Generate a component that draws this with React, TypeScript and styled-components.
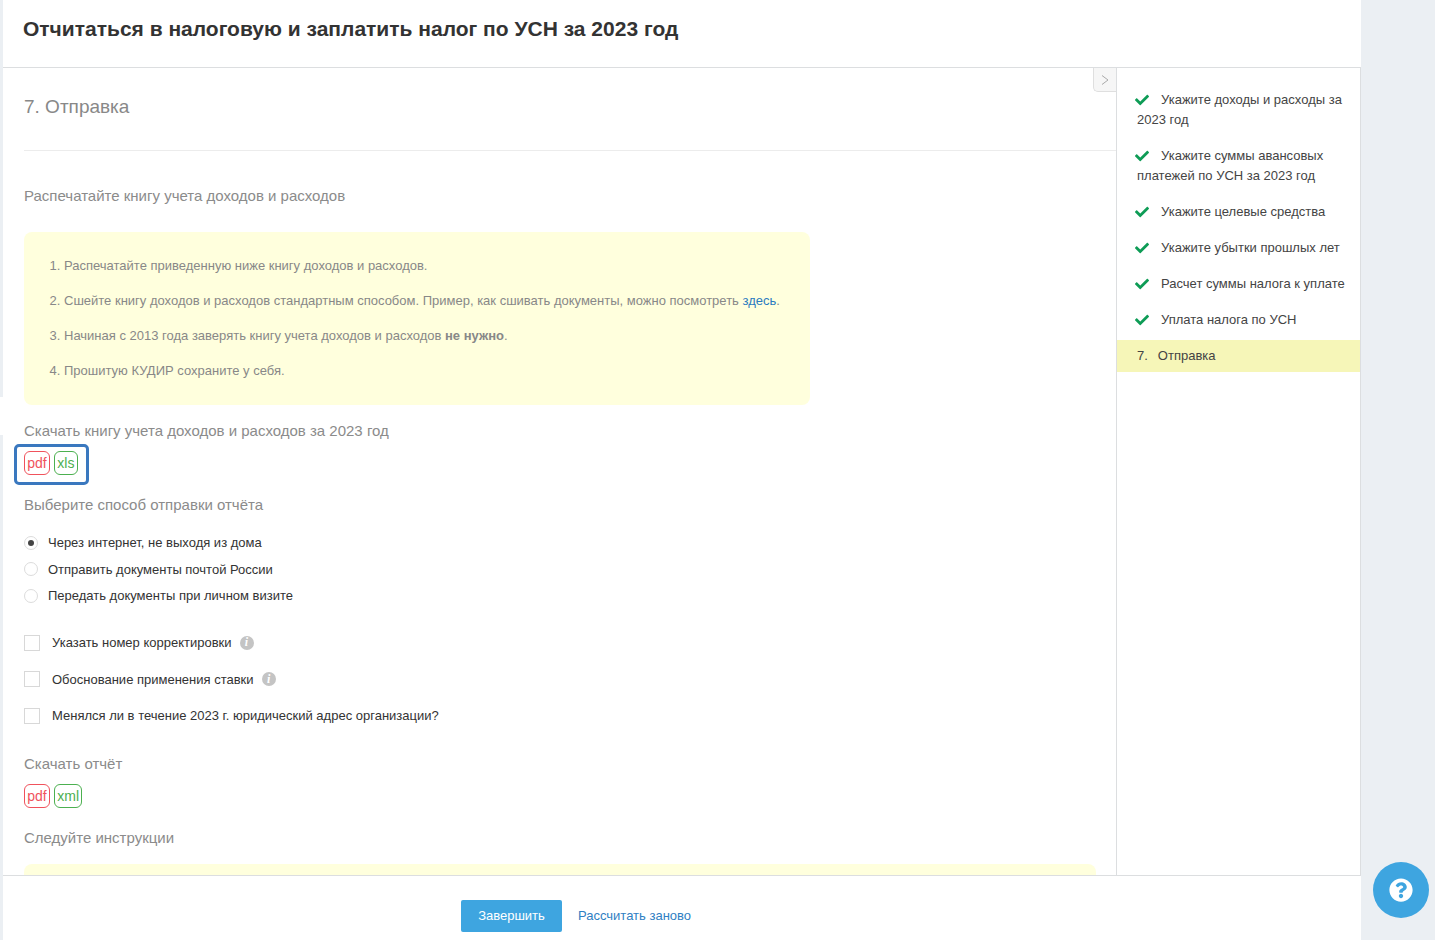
import { FC } from "react";
import styled, { createGlobalStyle } from "styled-components";
import { FaCheck, FaQuestionCircle } from "react-icons/fa";

const GlobalStyle = createGlobalStyle`
  html, body {
    margin: 0;
    padding: 0;
    height: 100%;
    overflow: hidden;
    background: #ebeff3;
    font-family: "Liberation Sans", Arial, sans-serif;
  }
  * { box-sizing: border-box; }
`;

const Shell = styled.div`
  position: relative;
  display: flex;
  flex-direction: column;
  width: 1358px;
  height: 940px;
  margin-left: 3px;
  background: #fff;
`;

const StripGap = styled.div`
  position: absolute;
  left: -3px;
  top: 397px;
  width: 3px;
  height: 38px;
  background: #fff;
`;

const Header = styled.header`
  flex: none;
  height: 68px;
  padding: 16px 20px 0;
  border-bottom: 1px solid #dcdee0;
`;

const Title = styled.h1`
  margin: 0;
  font-size: 21px;
  line-height: 26px;
  font-weight: bold;
  color: #333;
`;

const Middle = styled.div`
  flex: 1;
  display: flex;
  min-height: 0;
  overflow: hidden;
`;

const Content = styled.main`
  position: relative;
  flex: none;
  width: 1113px;
  padding-left: 21px;
  overflow: hidden;
`;

const Toggle = styled.div`
  position: absolute;
  top: 0;
  right: 0;
  width: 23px;
  height: 24px;
  display: flex;
  align-items: center;
  justify-content: center;
  background: #f6f6f6;
  border: 1px solid #dfdfdf;
  border-top: 0;
  border-right: 0;
  border-bottom-left-radius: 5px;
`;

const StepTitle = styled.h2`
  margin: 0;
  padding: 25px 0 30px;
  height: 83px;
  border-bottom: 1px solid #ececec;
  font-size: 19px;
  line-height: 27px;
  font-weight: normal;
  color: #888;
`;

const SectionTitle = styled.div<{ $top: number }>`
  margin-top: ${({ $top }) => $top}px;
  font-size: 15px;
  line-height: 20px;
  color: #8b8b8b;
`;

const Note = styled.ol`
  width: 786px;
  margin: 26px 0 0;
  padding: 16px 26px 17px 40px;
  background: #ffffdd;
  border-radius: 8px;
  list-style: decimal;
  font-size: 13px;
  line-height: 35px;
  color: #888;
  b { font-weight: bold; }
`;

const InstructionBox = styled.div`
  width: 1072px;
  height: 120px;
  margin-top: 16px;
  background: #ffffdd;
  border-radius: 8px;
`;

const InlineLink = styled.a`
  color: #2b7bc0;
`;

const Badges = styled.div`
  display: flex;
  gap: 4px;
  margin-top: 10px;
`;

const Highlighted = styled.div`
  width: 75px;
  height: 41px;
  margin: 3px 0 0 -10px;
  padding: 4px 0 0 7px;
  border: 3px solid #3a78bf;
  border-radius: 5px;
  ${Badges} {
    margin-top: 0;
  }
`;

const Badge = styled.span<{ $tone: "red" | "green" }>`
  display: block;
  height: 24px;
  padding: 0 2.3px;
  border: 1px solid ${({ $tone }) => ($tone === "red" ? "#f0525c" : "#4cb050")};
  border-radius: 6px;
  font-size: 14px;
  line-height: 22px;
  color: ${({ $tone }) => ($tone === "red" ? "#f0525c" : "#4cb050")};
`;

const RadioGroup = styled.div`
  display: flex;
  flex-direction: column;
  margin-top: 14.5px;
`;

const RadioRow = styled.label`
  display: flex;
  align-items: center;
  gap: 10px;
  height: 26.5px;
  font-size: 13px;
  color: #333;
`;

const RadioMark = styled.span<{ $checked?: boolean }>`
  flex: none;
  display: flex;
  align-items: center;
  justify-content: center;
  width: 14px;
  height: 14px;
  border: 1px solid #dcdcdc;
  border-radius: 50%;
  background: #fff;
  &::after {
    content: "";
    display: ${({ $checked }) => ($checked ? "block" : "none")};
    width: 6px;
    height: 6px;
    border-radius: 50%;
    background: #444;
  }
`;

const CheckGroup = styled.div`
  display: flex;
  flex-direction: column;
  margin-top: 15.5px;
`;

const CheckRow = styled.label`
  display: flex;
  align-items: center;
  height: 36.5px;
  font-size: 13px;
  color: #333;
`;

const CheckBox = styled.span`
  flex: none;
  width: 16px;
  height: 16px;
  margin-right: 12px;
  border: 1px solid #d8d8d8;
  background: #fff;
`;

const Info = styled.span`
  flex: none;
  display: flex;
  align-items: center;
  justify-content: center;
  width: 14px;
  height: 14px;
  margin-left: 8px;
  border-radius: 50%;
  background: #c4c4c4;
  color: #fff;
  font-family: "Liberation Serif", serif;
  font-style: italic;
  font-weight: bold;
  font-size: 12px;
`;

const Sidebar = styled.aside`
  flex: none;
  width: 245px;
  padding-top: 14px;
  border-left: 1px solid #dcdee0;
  border-right: 1px solid #dcdee0;
`;

const StepItem = styled.div`
  padding: 8px 14px 8px 20px;
  font-size: 13px;
  line-height: 20px;
  color: #444;
`;

const StepCheck = styled(FaCheck)`
  margin: 0 12px 0 -2px;
  vertical-align: -3px;
  color: #0e9c56;
`;

const ActiveStep = styled.div`
  display: flex;
  gap: 10px;
  height: 32px;
  margin-top: 2px;
  padding-left: 20px;
  background: #f6f6b8;
  font-size: 13px;
  line-height: 32px;
  color: #444;
`;

const Footer = styled.footer`
  flex: none;
  display: flex;
  align-items: center;
  height: 65px;
  padding: 24px 0 8px 458px;
  border-top: 1px solid #dcdee0;
`;

const FinishButton = styled.button`
  width: 101px;
  height: 32px;
  padding: 0 0 2px;
  border: 0;
  border-radius: 2px;
  background: #3ea5e0;
  color: #fff;
  font-family: inherit;
  font-size: 13px;
`;

const Recalc = styled.a`
  margin-left: 16px;
  padding-bottom: 2px;
  font-size: 13px;
  color: #2f80c3;
`;

const Help = styled.div`
  position: fixed;
  left: 1373px;
  top: 862px;
  width: 56px;
  height: 56px;
  display: flex;
  align-items: center;
  justify-content: center;
  border-radius: 50%;
  background: #3ea5e0;
  color: #fff;
`;

const Chevron: FC = () => (
  <svg width="8" height="10" viewBox="0 0 8 10" fill="none">
    <path d="M1 .5 7 5 1 9.5" stroke="#a9a9a9" strokeWidth="1" />
  </svg>
);

const doneSteps = [
  "Укажите доходы и расходы за 2023 год",
  "Укажите суммы авансовых платежей по УСН за 2023 год",
  "Укажите целевые средства",
  "Укажите убытки прошлых лет",
  "Расчет суммы налога к уплате",
  "Уплата налога по УСН",
];

const sendMethods = [
  "Через интернет, не выходя из дома",
  "Отправить документы почтой России",
  "Передать документы при личном визите",
];

export default function App() {
  return (
    <>
      <GlobalStyle />
      <Shell>
        <StripGap />
        <Header>
          <Title>Отчитаться в налоговую и заплатить налог по УСН за 2023 год</Title>
        </Header>
        <Middle>
          <Content>
            <Toggle>
              <Chevron />
            </Toggle>
            <StepTitle>7. Отправка</StepTitle>
            <SectionTitle $top={35}>Распечатайте книгу учета доходов и расходов</SectionTitle>
            <Note>
              <li>Распечатайте приведенную ниже книгу доходов и расходов.</li>
              <li>
                Сшейте книгу доходов и расходов стандартным способом. Пример, как сшивать
                документы, можно посмотреть <InlineLink>здесь</InlineLink>.
              </li>
              <li>
                Начиная с 2013 года заверять книгу учета доходов и расходов <b>не нужно</b>.
              </li>
              <li>Прошитую КУДИР сохраните у себя.</li>
            </Note>
            <SectionTitle $top={16}>Скачать книгу учета доходов и расходов за 2023 год</SectionTitle>
            <Highlighted>
              <Badges>
                <Badge $tone="red">pdf</Badge>
                <Badge $tone="green">xls</Badge>
              </Badges>
            </Highlighted>
            <SectionTitle $top={10}>Выберите способ отправки отчёта</SectionTitle>
            <RadioGroup>
              {sendMethods.map((m, i) => (
                <RadioRow key={m}>
                  <RadioMark $checked={i === 0} />
                  {m}
                </RadioRow>
              ))}
            </RadioGroup>
            <CheckGroup>
              <CheckRow>
                <CheckBox />
                Указать номер корректировки
                <Info>i</Info>
              </CheckRow>
              <CheckRow>
                <CheckBox />
                Обоснование применения ставки
                <Info>i</Info>
              </CheckRow>
              <CheckRow>
                <CheckBox />
                Менялся ли в течение 2023 г. юридический адрес организации?
              </CheckRow>
            </CheckGroup>
            <SectionTitle $top={20}>Скачать отчёт</SectionTitle>
            <Badges>
              <Badge $tone="red">pdf</Badge>
              <Badge $tone="green">xml</Badge>
            </Badges>
            <SectionTitle $top={20}>Следуйте инструкции</SectionTitle>
            <InstructionBox />
          </Content>
          <Sidebar>
            {doneSteps.map(s => (
              <StepItem key={s}>
                <StepCheck size={14} />
                {s}
              </StepItem>
            ))}
            <ActiveStep>
              <span>7.</span>
              <span>Отправка</span>
            </ActiveStep>
          </Sidebar>
        </Middle>
        <Footer>
          <FinishButton>Завершить</FinishButton>
          <Recalc>Рассчитать заново</Recalc>
        </Footer>
      </Shell>
      <Help>
        <FaQuestionCircle size={24} />
      </Help>
    </>
  );
}
